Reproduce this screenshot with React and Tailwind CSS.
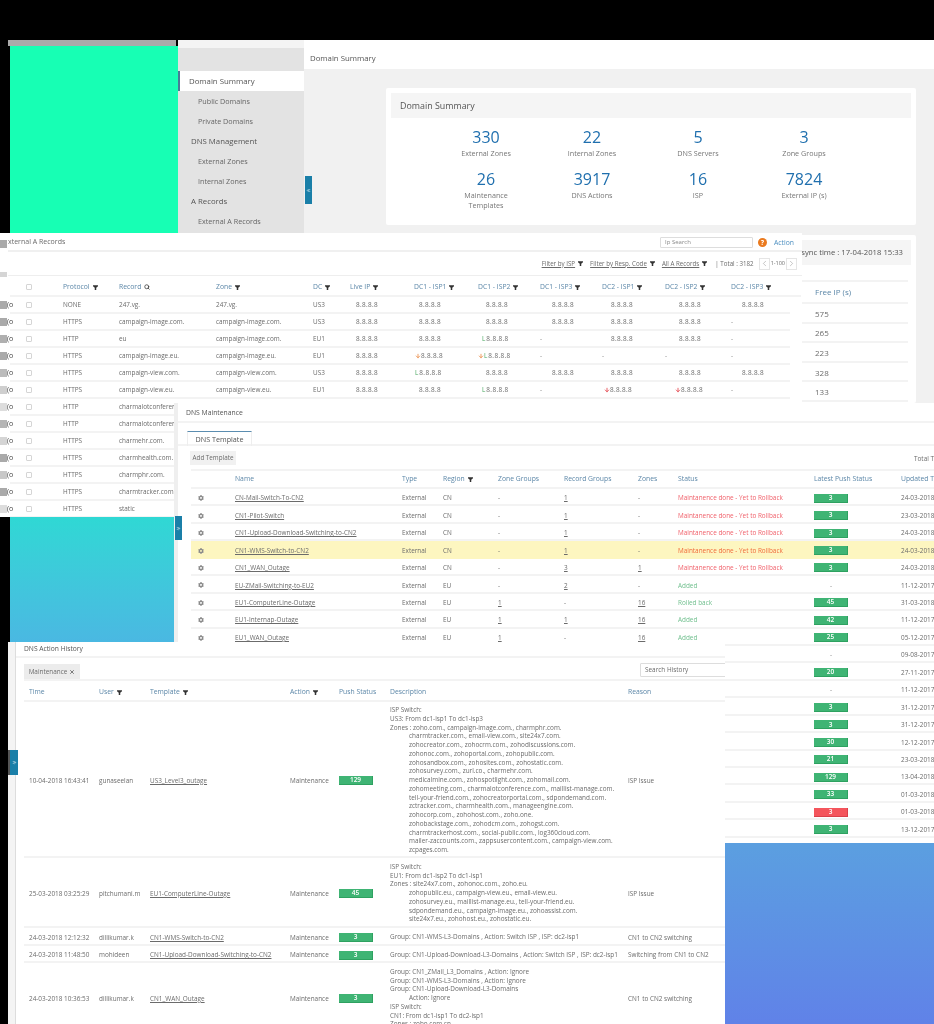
import React from "react";
import { Search, X, ChevronLeft, ChevronRight, ChevronsLeft, ChevronsRight, ArrowDown } from "lucide-react";
import { FaCog } from "react-icons/fa";

const Funnel = () => (
  <svg viewBox="0 0 8 8" className="w-[5px] h-[5px] inline-block shrink-0 ml-[3px] text-[#333]" fill="currentColor">
    <path d="M0 0.5h8v1.4L5.2 4.4V8H2.8V4.4L0 1.9z" />
  </svg>
);

const SideItem = ({ children, sub, active }) => (
  <div className={active
    ? "h-[20px] pt-[1px] flex items-center bg-white border-l-2 border-[#4a7a96] pl-[9px] text-[7.8px] text-[#555]"
    : sub
      ? "h-[20px] flex items-center pl-[20px] text-[7.2px] text-[#666]"
      : "h-[20px] pt-[1px] flex items-center pl-[13px] text-[7.8px] text-[#555]"}>{children}</div>
);

const Stat = ({ n, label, sub }) => (
  <div className="flex flex-col items-center h-[42px]">
    <div className="text-[16px] leading-[20px] text-[#1f6fae]">{n}</div>
    <div className="text-[7.2px] leading-[10px] text-[#777] mt-[1px] text-center">{label}{sub && <br />}{sub}</div>
  </div>
);

const ipCols = ["pl-[6px]", "pl-[5px]", "pl-[8px]", "pl-[12px]", "pl-[9px]", "pl-[14px]", "pl-[11px]"];
const markCols = ["pl-[0px]", "pl-[1px]", "pl-[4px]", "pl-[0px]", "pl-[2px]", "pl-[10px]", "pl-[0px]"];
const Ip = ({ v, col }) => {
  if (v === "-") return <div className="text-[#888]">-</div>;
  const orange = v === "dL" || v === "o";
  const red = v === "r";
  const hasL = v === "L" || v === "dL";
  const pad = v === "dL" ? "pl-[0px]" : hasL || orange || red ? markCols[col] : ipCols[col];
  return (
    <div className={`whitespace-nowrap flex items-center ${pad}`}>
      {orange && <ArrowDown size={6} strokeWidth={3} className="text-[#e8833a]" />}
      {red && <ArrowDown size={6} strokeWidth={3} className="text-[#e0303a]" />}
      {hasL && <span className="text-[#49a85f] mr-[1px]">L</span>}
      <span className="tracking-[0.35px]">8.8.8.8</span>
    </div>
  );
};

const aRows = [
  ["NONE", "247.vg.", "247.vg.", "US3", ["ip", "ip", "ip", "ip", "ip", "ip", "ip"]],
  ["HTTPS", "campaign-image.com.", "campaign-image.com.", "US3", ["ip", "ip", "ip", "ip", "ip", "ip", "-"]],
  ["HTTP", "eu", "campaign-image.com.", "EU1", ["ip", "ip", "L", "-", "ip", "ip", "-"]],
  ["HTTPS", "campaign-image.eu.", "campaign-image.eu.", "EU1", ["ip", "o", "dL", "-", "-", "-", "-"]],
  ["HTTPS", "campaign-view.com.", "campaign-view.com.", "US3", ["ip", "L", "ip", "ip", "ip", "ip", "ip"]],
  ["HTTPS", "campaign-view.eu.", "campaign-view.eu.", "EU1", ["ip", "ip", "L", "-", "r", "r", "-"]],
  ["HTTP", "charmalotconference.com.", "", "", null],
  ["HTTP", "charmalotconference.eu.", "", "", null],
  ["HTTPS", "charmehr.com.", "", "", null],
  ["HTTPS", "charmhealth.com.", "", "", null],
  ["HTTPS", "charmphr.com.", "", "", null],
  ["HTTPS", "charmtracker.com.", "", "", null],
  ["HTTPS", "static", "", "", null],
];
const blotch = ["bg-[#aaaaaa]", "bg-[#aaaaaa]", "bg-[#b0b0b0]", "bg-[#aaaaaa]", "bg-[#bbbbbb]", "bg-[#cfcfcf]", "bg-[#dddddd]", "bg-[#b5b5b5]", "bg-[#d5d5d5]", "bg-[#aaaaaa]", "bg-[#c8c8c8]", "bg-[#aaaaaa]", "bg-[#dddddd]"];
const aGrid = "grid grid-cols-[37px_56px_97px_97px_37px_64px_64px_62px_62px_63px_66px_59px] items-center";

const Check = () => <div className="w-[6px] h-[6px] border border-[#d5d5d5] rounded-[1px] bg-white" />;

const H = ({ children, f }) => <div className="flex items-center text-[6.8px] text-[#5c87a8] whitespace-nowrap">{children}{f && <Funnel />}</div>;

const Badge = ({ v, red }) => (
  <div className={`w-[34px] h-[9px] flex items-center justify-center text-[6.5px] font-semibold text-white border-b border-r ${red ? "bg-[#f4555c] border-[#d9404a]" : "bg-[#3fb474] border-[#2ea160]"}`}>{v}</div>
);

const R = "Maintanence done - Yet to Rollback";
const tRows = [
  ["CN-Mail-Switch-To-CN2", "CN", "-", "1", "-", R, 3, "24-03-2018"],
  ["CN1-Pilot-Switch", "CN", "-", "1", "-", R, 3, "23-03-2018"],
  ["CN1-Upload-Download-Switching-to-CN2", "CN", "-", "1", "-", R, 3, "24-03-2018"],
  ["CN1-WMS-Switch-to-CN2", "CN", "-", "1", "-", R, 3, "24-03-2018"],
  ["CN1_WAN_Outage", "CN", "-", "3", "1", R, 3, "24-03-2018"],
  ["EU-ZMail-Switching-to-EU2", "EU", "-", "2", "-", "Added", "-", "11-12-2017"],
  ["EU1-ComputerLine-Outage", "EU", "1", "-", "16", "Rolled back", 45, "31-03-2018"],
  ["EU1-Internap-Outage", "EU", "1", "1", "16", "Added", 42, "11-12-2017"],
  ["EU1_WAN_Outage", "EU", "1", "-", "16", "Added", 25, "05-12-2017"],
  ["", "", "", "", "", "", "-", "09-08-2017"],
  ["", "", "", "", "", "", 20, "27-11-2017"],
  ["", "", "", "", "", "", "-", "11-12-2017"],
  ["", "", "", "", "", "", 3, "31-12-2017"],
  ["", "", "", "", "", "", 3, "31-12-2017"],
  ["", "", "", "", "", "", 30, "12-12-2017"],
  ["", "", "", "", "", "", 21, "23-03-2018"],
  ["", "", "", "", "", "", 129, "13-04-2018"],
  ["", "", "", "", "", "", 33, "01-03-2018"],
  ["", "", "", "", "", "", "3!", "01-03-2018"],
  ["", "", "", "", "", "", 3, "13-12-2017"],
];
const tGrid = "grid grid-cols-[44px_167px_41px_55px_66px_74px_40px_136px_87px_60px] items-center";

const hGrid = "grid grid-cols-[75px_51px_140px_49px_51px_238px_97px] items-center";
const HRow = ({ t, u, tpl, v, desc, reason, h }) => (
  <div className={`${hGrid} ${h} pt-[3px] border-b-2 border-[#f3f3f3] w-[701px] shrink-0`}>
    <div className="pl-[5px] whitespace-nowrap">{t}</div>
    <div>{u}</div>
    <div className="underline whitespace-nowrap">{tpl}</div>
    <div>Maintenance</div>
    <div><Badge v={v} /></div>
    <div className="leading-[8.75px] whitespace-nowrap">
      {desc.map((d, i) => (
        <div key={i} className={d.startsWith(" ") ? "pl-[19px]" : ""}>{d.trim()}</div>
      ))}
    </div>
    <div className="whitespace-nowrap">{reason}</div>
  </div>
);

export default function App() {
  return (
    <div className="relative w-[934px] h-[1024px] overflow-hidden bg-black font-['Open_Sans',sans-serif] text-[6.4px] text-[#6b6b6b] blur-[0.4px]">

      {/* Domain summary window */}
      <div className="absolute left-[8px] top-[40px] w-[926px] h-[363px] flex bg-[#f1f1f1]">
        <div className="w-[170px] shrink-0 bg-black">
          <div className="h-[6px] w-[168px] bg-[#aaaaaa]" />
          <div className="ml-[2px] h-[187px] bg-[#17ffb4]" />
        </div>
        <div className="w-[126px] shrink-0">
          <div className="h-[8px] bg-[#f4f4f4]" />
          <div className="h-[185px] bg-[#e3e3e3]">
            <div className="h-[23px]" />
            <SideItem active>Domain Summary</SideItem>
            <SideItem sub>Public Domains</SideItem>
            <SideItem sub>Private Domains</SideItem>
            <SideItem>DNS Management</SideItem>
            <SideItem sub>External Zones</SideItem>
            <SideItem sub>Internal Zones</SideItem>
            <SideItem>A Records</SideItem>
            <SideItem sub>External A Records</SideItem>
          </div>
        </div>
        <div className="flex-1 min-w-0">
          <div className="h-[29px] bg-white pt-[12px] pl-[6px] text-[7.8px] leading-[12px] text-[#555]">Domain Summary</div>
          <div className="pl-[82px] pt-[19px]">
            <div className="w-[530px] h-[137px] bg-white rounded-[2px] p-[5px]">
              <div className="h-[25px] bg-[#f5f5f5] flex items-center pl-[9px] text-[8.9px] text-[#555]">Domain Summary</div>
              <div className="pl-[42px] pt-[9px] grid grid-cols-[repeat(4,106px)]">
                <Stat n="330" label="External Zones" />
                <Stat n="22" label="Internal Zones" />
                <Stat n="5" label="DNS Servers" />
                <Stat n="3" label="Zone Groups" />
                <Stat n="26" label="Maintenance" sub="Templates" />
                <Stat n="3917" label="DNS Actions" />
                <Stat n="16" label="ISP" />
                <Stat n="7824" label="External IP (s)" />
              </div>
            </div>
            <div className="w-[530px] h-[168px] mt-[10px] bg-white rounded-[2px] p-[5px]">
              <div className="h-[25px] bg-[#f5f5f5] flex items-center justify-end pr-[8px] text-[7.7px] text-[#555]">Last sync time : 17-04-2018 15:33</div>
              <div className="mt-[15px] w-[517px] text-[8px]">
                <div className="h-[24px] border-y-2 border-[#f3f3f3] flex items-center pl-[424px] text-[#5c87a8]">Free IP (s)</div>
                {["575", "265", "223", "328", "133"].map((v) => (
                  <div key={v} className="h-[19.6px] pt-[2px] border-b-2 border-[#f3f3f3] flex items-center pl-[424px]">{v}</div>
                ))}
              </div>
            </div>
          </div>
        </div>
      </div>
      <div className="absolute left-[305px] top-[176px] w-[7px] h-[28px] bg-[#1a7fa8] flex items-center justify-center text-white">
        <ChevronsLeft size={5} strokeWidth={3} />
      </div>

      {/* External A records window */}
      <div className="absolute left-0 top-[233px] w-[802px] h-[284px] bg-white">
        <div className="absolute left-0 top-[7px] w-[7px] h-[8px] bg-[#aaaaaa]" />
        <div className="absolute left-0 top-[39px] w-[7px] h-[5px] bg-[#d5d5d5]" />
        <div className="h-[19px] pt-[2px] border-b-2 border-[#f0f0f0] flex items-center ml-[8px] relative">
          <span className="whitespace-nowrap text-[7px]">xternal A Records</span>
          <div className="absolute left-[652px] top-[4px] w-[93px] h-[11px] border border-[#dddddd] rounded-[1px] flex items-center pl-[4px] text-[6px] text-[#888]">Ip Search</div>
          <div className="absolute left-[750px] top-[5px] w-[9px] h-[9px] rounded-full bg-[#ea7a1f] flex items-center justify-center text-white text-[7px] font-bold leading-none">?</div>
          <div className="absolute left-[766px] top-[5px] text-[#4d8fc0] text-[6.8px]">Action</div>
        </div>
        <div className="h-[24px] flex items-center justify-end pr-[5px] border-b border-[#eeeeee] ml-[8px] text-[6.2px]">
          <span className="underline">Filter by ISP</span><Funnel />
          <span className="underline ml-[7px]">Filter by Resp. Code</span><Funnel />
          <span className="underline ml-[7px]">All A Records</span><Funnel />
          <span className="ml-[8px]">| Total : 3182</span>
          <span className="ml-[5px] w-[11px] h-[12px] border border-[#e5e5e5] flex items-center justify-center"><ChevronLeft size={9} strokeWidth={1} /></span>
          <span className="mx-[1px] text-[5.5px]">1-100</span>
          <span className="w-[11px] h-[12px] border border-[#e5e5e5] flex items-center justify-center"><ChevronRight size={9} strokeWidth={1} /></span>
        </div>
        <div className="flex">
          <div className="w-[10px] shrink-0 pt-[20px]">
            {aRows.map((_, i) => (
              <div key={i} className="h-[17px] flex items-center relative">
                <div className={`w-[7px] h-[8px] ${blotch[i]}`} />
                <span className="absolute left-[7px] text-[7px] text-[#444] leading-none">(o</span>
              </div>
            ))}
          </div>
          <div className="w-[791px]">
            <div className={`${aGrid} h-[21px] pl-[16px] pt-[3px] border-b-2 border-[#f3f3f3]`}>
              <div><Check /></div>
              <H f>Protocol</H>
              <H><span>Record</span><Search size={6} strokeWidth={3} className="ml-[3px] text-[#333]" /></H>
              <H f>Zone</H>
              <H f>DC</H>
              <H f>Live IP</H>
              <H f>DC1 - ISP1</H>
              <H f>DC1 - ISP2</H>
              <H f>DC1 - ISP3</H>
              <H f>DC2 - ISP1</H>
              <H f>DC2 - ISP2</H>
              <H f>DC2 - ISP3</H>
            </div>
            {aRows.map((r, i) => (
              <div key={i} className={`${aGrid} h-[17px] w-[780px] pl-[16px] pt-[1px] border-b-2 border-[#f3f3f3]`}>
                <div><Check /></div>
                <div>{r[0]}</div>
                <div className="whitespace-nowrap">{r[1]}</div>
                <div className="whitespace-nowrap">{r[2]}</div>
                <div>{r[3]}</div>
                {r[4] && r[4].map((v, j) => <Ip key={j} v={v} col={j} />)}
              </div>
            ))}
          </div>
        </div>
      </div>

      {/* Cyan panel */}
      <div className="absolute left-[10px] top-[517px] w-[164px] h-[125px] bg-gradient-to-b from-[#2fd8d4] to-[#4ab8e2]" />

      {/* DNS maintenance window */}
      <div className="absolute left-[174px] top-[403px] w-[760px] h-[440px] bg-[#efefef] pl-[4px]">
        <div className="h-full bg-white">
          <div className="h-[20px] pt-[2px] border-b-2 border-[#f3f3f3] flex items-center pl-[8px] text-[6.8px] text-[#555]">DNS Maintenance</div>
          <div className="h-[23px] border-b-2 border-[#f3f3f3] pl-[9px] pt-[8px]">
            <div className="w-[65px] h-[15px] border-t border-x border-t-[#5b8db0] border-x-[#eeeeee] flex items-center justify-center text-[7.2px] text-[#555]">DNS Template</div>
          </div>
          <div className="h-[23px] flex items-start pl-[12px] pt-[5px]">
            <div className="w-[46px] h-[14px] bg-[#f1f1f1] flex items-center justify-center text-[6.3px] shrink-0 whitespace-nowrap">Add Template</div>
            <div className="ml-[678px] mt-[3px] whitespace-nowrap shrink-0">Total Templates : 20</div>
          </div>
          <div className="pl-[13px]">
            <div className={`${tGrid} h-[20px] pt-[1px] border-y-2 border-[#f3f3f3]`}>
              <div />
              <H>Name</H><H>Type</H><H f>Region</H><H>Zone Groups</H><H>Record Groups</H><H>Zones</H><H>Status</H><H>Latest Push Status</H><H>Updated Time</H>
            </div>
            {tRows.map((r, i) => (
              <div key={i} className={`${tGrid} h-[17.45px] pt-[3px] border-b-2 ${i === 3 ? "bg-[#fdf6c0] border-[#fdf6c0]" : "border-[#f3f3f3]"}`}>
                <div className="pl-[7px]">{r[0] && <FaCog size={6} className="text-[#8a8a8a]" />}</div>
                <div className="underline whitespace-nowrap">{r[0]}</div>
                <div>{r[0] && "External"}</div>
                <div>{r[1]}</div>
                <div className={r[2] === "1" ? "underline" : ""}>{r[2]}</div>
                <div className={r[3] !== "-" ? "underline" : ""}>{r[3]}</div>
                <div className={r[4] !== "-" ? "underline" : ""}>{r[4]}</div>
                <div className={`whitespace-nowrap ${i === 3 ? "text-[#f06a3a]" : r[5] === R ? "text-[#f0606a]" : "text-[#6fbf8d]"}`}>{r[5]}</div>
                <div>{r[6] === "-" ? <div className="w-[34px] text-center text-[#888]">-</div> : r[6] === "3!" ? <Badge v="3" red /> : <Badge v={r[6]} />}</div>
                <div className="whitespace-nowrap">{r[7]}</div>
              </div>
            ))}
          </div>
        </div>
      </div>
      <div className="absolute left-[175px] top-[516px] w-[7px] h-[24px] bg-[#1a7fa8] flex items-center justify-center text-white">
        <ChevronsRight size={5} strokeWidth={3} />
      </div>

      {/* DNS action history window */}
      <div className="absolute left-[8px] top-[642px] w-[717px] h-[382px] flex bg-[#f4f4f4] overflow-hidden">
        <div className="w-[8px] shrink-0 border-r border-[#dddddd]" />
        <div className="flex-1 min-w-0 bg-white flex flex-col">
          <div className="h-[16px] border-b-2 border-[#f3f3f3] flex items-center pl-[8px] text-[6.7px] text-[#555] shrink-0">DNS Action History</div>
          <div className="h-[23px] ml-[8px] border-b-2 border-[#f3f3f3] flex items-start pt-[6px] shrink-0 w-[701px] relative">
            <div className="w-[56px] h-[15px] bg-[#ececec] flex items-center justify-center whitespace-nowrap">Maintenance<X size={6} strokeWidth={3} className="ml-[2px] text-[#555]" /></div>
            <div className="absolute left-[616px] top-[5px] w-[90px] h-[14px] border border-[#dddddd] rounded-[1px] flex items-center pl-[4px]">Search History</div>
          </div>
          <div className="ml-[8px] flex flex-col">
            <div className={`${hGrid} h-[21px] pt-[4px] border-b-2 border-[#f3f3f3] w-[701px] shrink-0`}>
              <div className="pl-[5px]"><H>Time</H></div><H f>User</H><H f>Template</H><H f>Action</H><H>Push Status</H><H>Description</H><H>Reason</H>
            </div>
            <HRow h="h-[156px]" t="10-04-2018 16:43:41" u="gunaseelan" tpl="US3_Level3_outage" v={129} reason="ISP Issue" desc={[
              "ISP Switch:", "US3: From dc1-isp1 To dc1-isp3",
              "Zones : zoho.com., campaign-image.com., charmphr.com.",
              " charmtracker.com., email-view.com., site24x7.com.",
              " zohocreator.com., zohocrm.com., zohodiscussions.com.",
              " zohonoc.com., zohoportal.com., zohopublic.com.",
              " zohosandbox.com., zohosites.com., zohostatic.com.",
              " zohosurvey.com., zurl.co., charmehr.com.",
              " medicalmine.com., zohospotlight.com., zohomail.com.",
              " zohomeeting.com., charmalotconference.com., maillist-manage.com.",
              " tell-your-friend.com., zohocreatorportal.com., sdpondemand.com.",
              " zctracker.com., charmhealth.com., manageengine.com.",
              " zohocorp.com., zohohost.com., zoho.one.",
              " zohobackstage.com., zohodcm.com., zohogst.com.",
              " charmtrackerhost.com., social-public.com., log360cloud.com.",
              " mailer-zaccounts.com., zappsusercontent.com., campaign-view.com.",
              " zcpages.com.",
            ]} />
            <HRow h="h-[70px]" t="25-03-2018 03:25:29" u="pitchumani.m" tpl="EU1-ComputerLine-Outage" v={45} reason="ISP Issue" desc={[
              "ISP Switch:", "EU1: From dc1-isp2 To dc1-isp1",
              "Zones : site24x7.com., zohonoc.com., zoho.eu.",
              " zohopublic.eu., campaign-view.eu., email-view.eu.",
              " zohosurvey.eu., maillist-manage.eu., tell-your-friend.eu.",
              " sdpondemand.eu., campaign-image.eu., zohoassist.com.",
              " site24x7.eu., zohohost.eu., zohostatic.eu.",
            ]} />
            <HRow h="h-[18px]" t="24-03-2018 12:12:32" u="dillikumar.k" tpl="CN1-WMS-Switch-to-CN2" v={3} reason="CN1 to CN2 switching" desc={["Group: CN1-WMS-L3-Domains , Action: Switch ISP , ISP: dc2-isp1"]} />
            <HRow h="h-[17px]" t="24-03-2018 11:48:50" u="mohideen" tpl="CN1-Upload-Download-Switching-to-CN2" v={3} reason="Switching from CN1 to CN2" desc={["Group: CN1-Upload-Download-L3-Domains , Action: Switch ISP , ISP: dc2-isp1"]} />
            <HRow h="h-[70px]" t="24-03-2018 10:36:53" u="dillikumar.k" tpl="CN1_WAN_Outage" v={3} reason="CN1 to CN2 switching" desc={[
              "Group: CN1_ZMail_L3_Domains , Action: Ignore",
              "Group: CN1-WMS-L3-Domains , Action: Ignore",
              "Group: CN1-Upload-Download-L3-Domains",
              " Action: Ignore",
              "ISP Switch:",
              "CN1: From dc1-isp1 To dc2-isp1",
              "Zones : zoho.com.cn.",
            ]} />
          </div>
        </div>
      </div>
      <div className="absolute left-[8px] top-[750px] w-[10px] h-[25px] flex">
        <div className="w-[2px] bg-[#555555]" />
        <div className="flex-1 bg-[#1a7fa8] flex items-center justify-center text-white"><ChevronsRight size={5} strokeWidth={3} /></div>
      </div>

      {/* Blue gradient panel */}
      <div className="absolute left-[725px] top-[843px] w-[209px] h-[181px] bg-gradient-to-b from-[#5b9fe0] to-[#6082e8]" />
    </div>
  );
}
